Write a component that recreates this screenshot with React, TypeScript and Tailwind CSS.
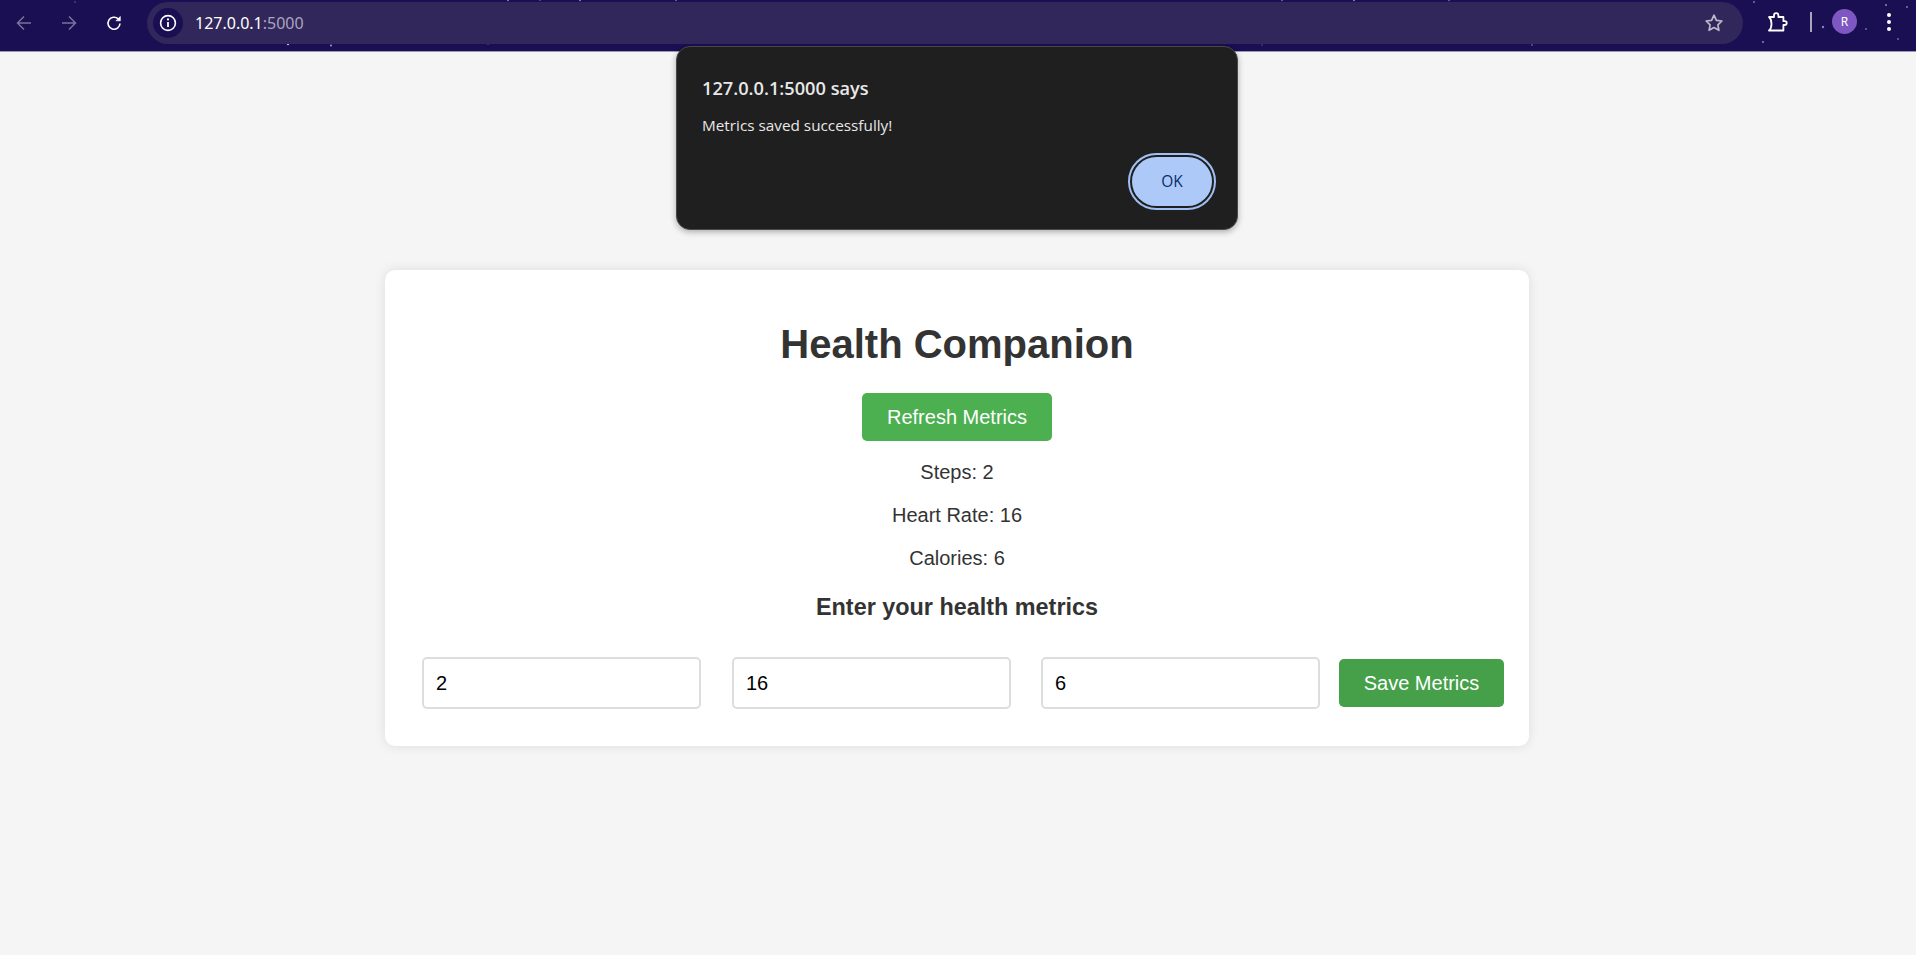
import React from "react";

const stars: [number, number, number, number][] = [
  [75, 2, 0.8, 0.4], [184, 43.5, 0.8, 0.7], [288, 44, 1.2, 0.9], [331, 45.5, 0.9, 0.8],
  [488, 44.5, 0.6, 0.4], [508, 0.5, 0.8, 0.7], [540, 0.5, 0.6, 0.5], [580, 0.5, 0.8, 0.7], [676, 0.5, 0.7, 0.6],
  [1262, 45, 0.7, 0.4], [1282, 0.5, 0.7, 0.6], [1354, 0.5, 0.8, 0.7], [1449, 0.5, 0.7, 0.6], [1532, 45, 0.8, 0.6],
  [1754, 2, 1, 0.5], [1763, 42, 1, 0.6], [1823, 27, 1.2, 0.6], [1866, 29, 0.9, 0.5],
  [1886, 5, 1, 0.6], [1898, 39, 0.9, 0.5], [1907, 7, 0.9, 0.6],
];

function Toolbar() {
  return (
    <div className="relative h-[52px] bg-[#1a0f52] border-b border-[#9d99b5] shrink-0">
      <svg className="absolute inset-0 w-full h-full" aria-hidden="true">
        {stars.map(([x, y, r, o], i) => (
          <circle key={i} cx={x} cy={y} r={r} fill="#cfd6ff" opacity={o} />
        ))}
      </svg>
      <div className="relative flex items-center h-[44px] pt-[1px]">
        <div className="flex items-center w-[147px] shrink-0 pl-[16px] gap-[29px]">
          <svg width="16" height="16" viewBox="0 0 16 16" fill="none" stroke="#7a7399" strokeWidth="1.5"><path d="M15 8H1.5M8 1.5 1.5 8 8 14.5" /></svg>
          <svg width="16" height="16" viewBox="0 0 16 16" fill="none" stroke="#7a7399" strokeWidth="1.5"><path d="M1 8h13.5M8 1.5 14.5 8 8 14.5" /></svg>
          <svg width="16" height="16" viewBox="0 0 16 16" fill="none" stroke="#ffffff" strokeWidth="1.6"><path d="M14 8.5a6 6 0 1 1-1.8-4.6L14 5.5" /><path d="M14.3 1.2v4.6H9.7" fill="#fff" strokeWidth="0.6" /></svg>
        </div>
        <div className="flex items-center flex-1 h-[42px] rounded-full bg-[#32275b] pl-[6px] mr-[173px]">
          <div className="flex items-center justify-center w-[30px] h-[30px] rounded-full bg-[#1a0f52]">
            <svg width="18" height="18" viewBox="0 0 18 18" fill="none"><circle cx="9" cy="9" r="7.4" stroke="#fff" strokeWidth="1.6" /><path d="M9 8v5" stroke="#fff" strokeWidth="1.8" /><circle cx="9" cy="5.4" r="1.1" fill="#fff" /></svg>
          </div>
          <div className="ml-[12px] text-[16px] font-['Noto_Sans',sans-serif] text-white">127.0.0.1<span className="text-[#a9a4bf]">:5000</span></div>
          <div className="ml-auto mr-[19px] flex">
            <svg width="20" height="20" viewBox="0 0 20 20" fill="none" stroke="#bdbaca" strokeWidth="1.7" strokeLinejoin="round"><path d="M10 2.2l2.4 5.1 5.5.7-4 3.8 1 5.5-4.9-2.7-4.9 2.7 1-5.5-4-3.8 5.5-.7z" /></svg>
          </div>
        </div>
        <div className="absolute left-[1767px] top-[12px]">
          <svg width="22" height="20" viewBox="0 0 22 20" fill="none" stroke="#fff" strokeWidth="1.8" strokeLinejoin="round"><path d="M2 5h5V3.4a2.2 2.2 0 0 1 4.4 0V5h5v4.2h1.4a1.9 1.9 0 0 1 0 3.8h-1.4v5.5H2c1.7-1.4 2.5-2.8 2.5-6.6S3.7 6.4 2 5z" /></svg>
        </div>
        <div className="absolute left-[1810px] top-[12px] w-[1.5px] h-[20px] bg-[#a8a5bd]" />
        <div className="absolute left-[1832px] top-[9px] w-[25px] h-[25px] rounded-full bg-[#7e57c2] text-white flex items-center justify-center text-[12px] font-['Noto_Sans',sans-serif]">R</div>
        <div className="absolute left-[1887px] top-[13px] flex flex-col gap-[3px]">
          <span className="w-[4px] h-[4px] rounded-full bg-white" />
          <span className="w-[4px] h-[4px] rounded-full bg-white" />
          <span className="w-[4px] h-[4px] rounded-full bg-white" />
        </div>
      </div>
    </div>
  );
}

function Field({ value }: { value: string }) {
  return (
    <input
      readOnly
      value={value}
      className="w-[279px] h-[52px] px-[12px] text-[20px] text-black bg-white border-2 border-[#dddddd] rounded-[5px] outline-none font-['Liberation_Sans',sans-serif]"
    />
  );
}

export default function App() {
  return (
    <div className="relative w-full h-[955px] overflow-hidden flex flex-col bg-[#f5f5f5] font-['Liberation_Sans',sans-serif]">
      <Toolbar />
      <div className="pl-[385px] pt-[218px]">
        <main className="w-[1144px] h-[476px] bg-white rounded-[10px] shadow-[0_0_12px_rgba(0,0,0,0.1)] flex flex-col items-center pt-[51px] text-[#333333]">
          <h1 className="text-[40px] leading-[46px] font-bold">Health Companion</h1>
          <button className="mt-[26px] w-[190px] h-[48px] rounded-[5px] bg-[#4caf50] text-white text-[20px]">Refresh Metrics</button>
          <p className="mt-[20px] text-[20px] leading-[23px]">Steps: 2</p>
          <p className="mt-[20px] text-[20px] leading-[23px]">Heart Rate: 16</p>
          <p className="mt-[20px] text-[20px] leading-[23px]">Calories: 6</p>
          <h3 className="mt-[24px] text-[23.4px] leading-[26px] font-bold">Enter your health metrics</h3>
          <div className="mt-[37px] flex items-center w-full pl-[37px]">
            <Field value="2" />
            <div className="w-[31px]" />
            <Field value="16" />
            <div className="w-[30px]" />
            <Field value="6" />
            <button className="ml-[19px] w-[165px] h-[48px] rounded-[5px] bg-[#45a049] text-white text-[20px]">Save Metrics</button>
          </div>
        </main>
      </div>
      <div className="absolute left-[676px] top-[46px] w-[562px] h-[184px] rounded-[14px] bg-[#1f1f1f] border border-[#484848] shadow-[0_2px_6px_rgba(0,0,0,0.3)] font-['Open_Sans',sans-serif] text-white">
        <div className="pl-[25px] pt-[28px] text-[18.2px] leading-[26px] font-semibold text-[#e8e8e8]">127.0.0.1:5000 says</div>
        <div className="pl-[25px] pt-[14px] text-[15.3px] leading-[20px] text-[#e8e8e8]">Metrics saved successfully!</div>
        <div className="absolute left-[451px] top-[106px] w-[88px] h-[57px] rounded-full border-2 border-[#a0c0f5] p-[2px]">
          <button className="w-full h-full rounded-full bg-[#adc9f7] text-[#062e6f] text-[15.5px] font-medium">OK</button>
        </div>
      </div>
    </div>
  );
}
